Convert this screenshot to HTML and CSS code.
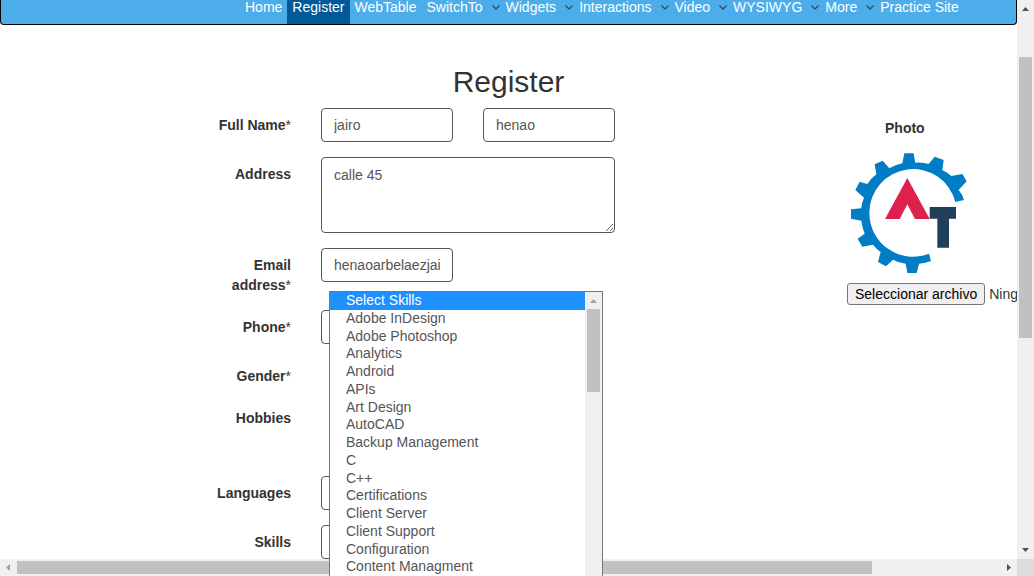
FILE: index.html
```
<!DOCTYPE html>
<html lang="en">
<head>
<meta charset="utf-8">
<title>Register</title>
<link rel="stylesheet" href="styles.css">
</head>
<body>
<div class="screen">
  <div class="page">
    <nav class="nav">
      <a class="nav-link" href="#">Home</a>
      <a class="nav-link active" href="#">Register</a>
      <a class="nav-link" href="#">WebTable</a>
      <a class="nav-link has-menu" href="#">SwitchTo<svg class="chevron" viewBox="0 0 8 5"><path d="M.5 .5L4 4L7.500 .5"/></svg></a>
      <a class="nav-link has-menu" href="#">Widgets<svg class="chevron" viewBox="0 0 8 5"><path d="M.5 .5L4 4L7.500 .5"/></svg></a>
      <a class="nav-link has-menu" href="#">Interactions<svg class="chevron" viewBox="0 0 8 5"><path d="M.5 .5L4 4L7.500 .5"/></svg></a>
      <a class="nav-link has-menu" href="#">Video<svg class="chevron" viewBox="0 0 8 5"><path d="M.5 .5L4 4L7.500 .5"/></svg></a>
      <a class="nav-link has-menu" href="#">WYSIWYG<svg class="chevron" viewBox="0 0 8 5"><path d="M.5 .5L4 4L7.500 .5"/></svg></a>
      <a class="nav-link has-menu" href="#">More<svg class="chevron" viewBox="0 0 8 5"><path d="M.5 .5L4 4L7.500 .5"/></svg></a>
      <a class="nav-link" href="#">Practice Site</a>
    </nav>
    <h2 class="title">Register</h2>
    <main class="content">
      <form class="form">
        <div class="row">
          <label class="label" for="first">Full Name<span class="star">*</span></label>
          <div class="fields">
            <input class="control" id="first" type="text" value="jairo">
            <input class="control" type="text" value="henao" aria-label="Last name">
          </div>
        </div>
        <div class="row">
          <label class="label" for="address">Address</label>
          <textarea class="control area" id="address">calle 45</textarea>
        </div>
        <div class="row">
          <label class="label" for="email">Email<br>address<span class="star">*</span></label>
          <div class="fields"><input class="control" id="email" type="text" value="henaoarbelaezjairo"></div>
        </div>
        <div class="row">
          <label class="label" for="phone">Phone<span class="star">*</span></label>
          <div class="fields"><input class="control" id="phone" type="tel"></div>
        </div>
        <div class="row">
          <span class="label">Gender<span class="star">*</span></span>
        </div>
        <div class="row tall">
          <span class="label">Hobbies</span>
        </div>
        <div class="row">
          <label class="label" for="languages">Languages</label>
          <div class="fields"><input class="control" id="languages" type="text"></div>
        </div>
        <div class="row">
          <label class="label" for="skills">Skills</label>
          <div class="fields"><select class="control" id="skills"></select></div>
        </div>
      </form>
      <section class="photo">
        <span class="photo-label">Photo</span>
        <svg class="logo" viewBox="48 129 348 360">
          <path fill="#007dc5" d="M282 431A131 131 0 0 1 103 309A131 131 0 0 1 361 276L387 270Q383 254 371 240L395 214L382 192L349 198Q338 188 322 180L326 150L299 140L281 162Q262 156 241 158L236 130H208L202 160Q181 164 163 175L143 152L119 163L124 193Q106 207 97 222L74 215L61 240L87 263Q79 280 79 295L47 298V326L79 332Q82 354 89 371L68 386L82 410L114 404Q124 417 137 426L129 456L153 469L174 449Q192 459 212 461L217 489H245L252 461Q272 459 288 453Z"/>
          <path fill="#dc224c" d="M150 327L217 204L284 327H240L217 283L194 327Z"/>
          <path fill="#213f58" d="M284 291H363V326H342V413H307V326H284Z"/>
        </svg>
        <div class="file">
          <button class="file-button" type="button">Seleccionar archivo</button>
          <span>Ning</span>
        </div>
      </section>
    </main>
  </div>
  <div class="bar vertical">
    <svg class="arrow" viewBox="0 0 17 17"><path d="M5 11L8.500 7L12 11Z"/></svg>
    <div class="track"><div class="thumb"></div></div>
    <svg class="arrow" viewBox="0 0 17 17"><path d="M5 6L8.500 10L12 6Z"/></svg>
  </div>
  <div class="bar horizontal">
    <svg class="arrow dim" viewBox="0 0 17 17"><path d="M10 5L6 8.500L10 12Z"/></svg>
    <div class="track"><div class="thumb"></div></div>
    <svg class="arrow" viewBox="0 0 17 17"><path d="M7 5L11 8.500L7 12Z"/></svg>
  </div>
  <div class="corner"></div>
  <div class="menu">
    <ul class="options" role="listbox" aria-label="Skills">
      <li class="option selected" role="option" aria-selected="true">Select Skills</li>
      <li class="option" role="option">Adobe InDesign</li>
      <li class="option" role="option">Adobe Photoshop</li>
      <li class="option" role="option">Analytics</li>
      <li class="option" role="option">Android</li>
      <li class="option" role="option">APIs</li>
      <li class="option" role="option">Art Design</li>
      <li class="option" role="option">AutoCAD</li>
      <li class="option" role="option">Backup Management</li>
      <li class="option" role="option">C</li>
      <li class="option" role="option">C++</li>
      <li class="option" role="option">Certifications</li>
      <li class="option" role="option">Client Server</li>
      <li class="option" role="option">Client Support</li>
      <li class="option" role="option">Configuration</li>
      <li class="option" role="option">Content Managment</li>
    </ul>
    <div class="menu-bar">
      <svg class="arrow dim" viewBox="0 0 17 17"><path d="M5 11L8.500 7L12 11Z"/></svg>
      <div class="thumb"></div>
    </div>
  </div>
</div>
</body>
</html>
```
FILE: styles.css
```
* { box-sizing: border-box; }
body {
  margin: 0;
  font: 14px/20px "Liberation Sans", Arial, sans-serif;
  color: #333;
  background: #fff;
}
.screen {
  position: relative;
  display: grid;
  grid-template: minmax(0, 1fr) 17px / minmax(0, 1fr) 17px;
  height: 100vh;
  overflow: hidden;
}
.page { overflow: hidden; }
.nav {
  display: flex;
  margin-top: -8px;
  padding-left: 239px;
  background: #4dadeb;
  border: 1px solid #000;
  border-top: 0;
  border-radius: 0 0 4px 4px;
}
.nav-link {
  padding: 5px 5px 7px;
  color: #fff;
  text-decoration: none;
  white-space: nowrap;
}
.nav-link.active { background: #005999; }
.nav-link.has-menu {
  display: flex;
  align-items: center;
  gap: 9px;
  padding-right: 1px;
}
.chevron {
  width: 8px;
  height: 5px;
  fill: none;
  stroke: #2c4f66;
  stroke-width: 1.300;
}
.title {
  margin: 40px 0 10px;
  font-size: 30px;
  font-weight: 400;
  line-height: 33px;
  text-align: center;
}
.content {
  display: flex;
  justify-content: space-between;
}
.form {
  display: flex;
  flex-direction: column;
  gap: 15px;
  width: 429px;
  margin-left: 186px;
}
.row {
  display: grid;
  grid-template-columns: 105px 1fr;
  column-gap: 30px;
  align-items: start;
}
.row.tall { min-height: 60px; }
.label {
  padding-top: 7px;
  font-weight: 700;
  text-align: right;
}
.star { font-weight: 400; }
.fields {
  display: grid;
  grid-template-columns: 1fr 1fr;
  gap: 30px;
}
.control {
  width: 100%;
  height: 34px;
  padding: 6px 12px;
  font: inherit;
  color: #555;
  background: #fff;
  border: 1px solid #555;
  border-radius: 4px;
}
.area {
  display: block;
  height: 76px;
  padding-top: 7px;
}
.photo {
  display: flex;
  flex-direction: column;
  width: 170px;
  padding-top: 10px;
}
.photo-label {
  margin-left: 38px;
  font-weight: 700;
}
.logo {
  width: 116px;
  height: 120px;
  margin: 15px 0 10px 4px;
}
.file {
  display: flex;
  gap: 4px;
  align-items: center;
  white-space: nowrap;
}
.file-button {
  height: 22px;
  padding: 0 7px;
  font: inherit;
  line-height: 20px;
  color: #000;
  background: #efefef;
  border: 1px solid #767676;
  border-radius: 3px;
}
.bar {
  display: flex;
  background: #f0f0f0;
}
.vertical { flex-direction: column; }
.track { flex: 1; }
.arrow {
  flex: none;
  width: 17px;
  height: 17px;
  fill: #505050;
}
.arrow.dim { fill: #a3a3a3; }
.thumb { background: #c1c1c1; }
.vertical .track { padding: 40px 2px 0; }
.vertical .thumb { height: 58%; max-height: 282px; }
.horizontal .track { padding: 2px 0; }
.horizontal .thumb { width: 87%; height: 13px; }
.corner { background: #dcdcdc; }
.menu {
  position: absolute;
  top: 291px;
  bottom: 0;
  left: 329px;
  display: flex;
  width: 274px;
  background: #fff;
  border: 1px solid #767676;
  border-bottom: 0;
}
.options {
  display: grid;
  flex: 1;
  grid-auto-rows: 1fr;
  margin: 0;
  padding: 0;
  list-style: none;
  color: #555;
}
.option {
  min-height: 0;
  padding-left: 16px;
  line-height: 17px;
}
.option.selected {
  color: #fff;
  background: #1e90ff;
}
.menu-bar {
  width: 17px;
  background: #f0f0f0;
}
.menu-bar .arrow { display: block; }
.menu-bar .thumb { height: 83px; margin: 0 2px; }
```
